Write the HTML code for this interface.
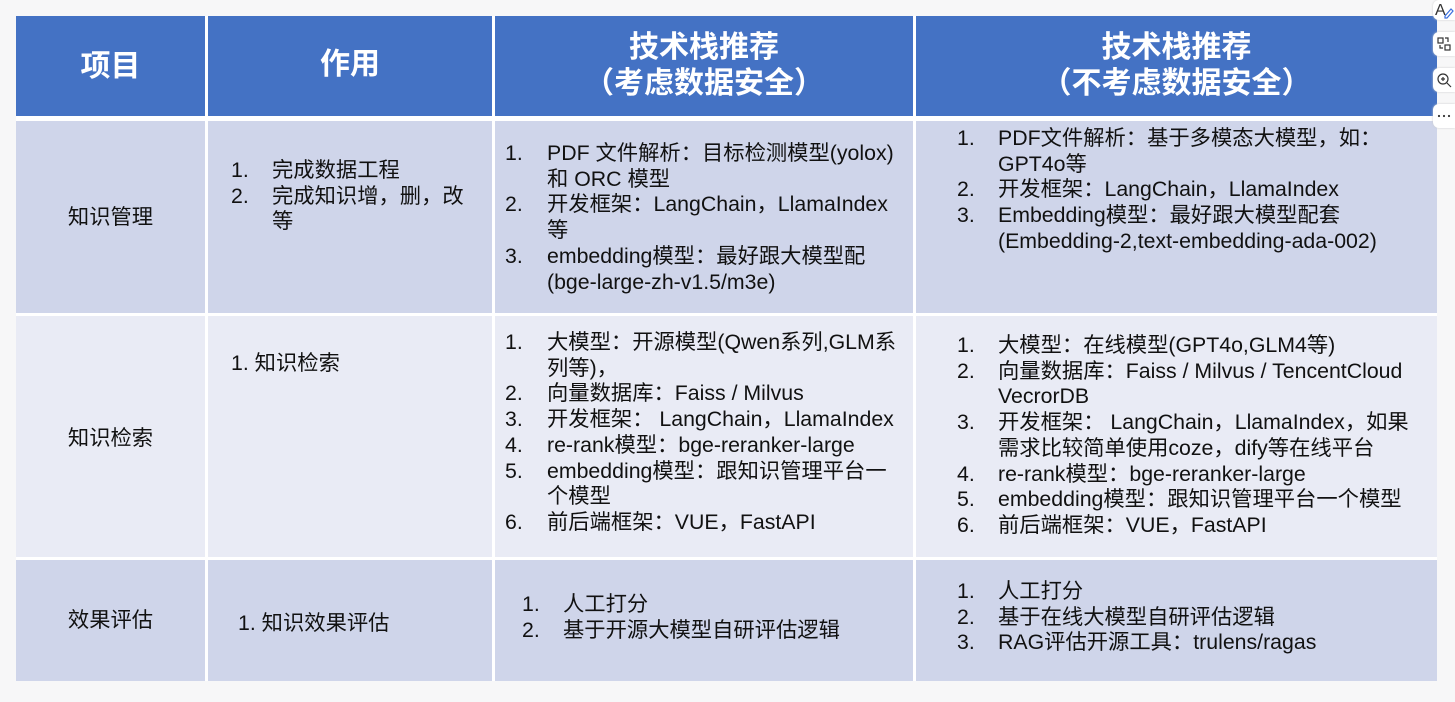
<!DOCTYPE html>
<html><head><meta charset="utf-8"><style>
*{margin:0;padding:0;box-sizing:border-box}
body{width:1455px;height:702px;background:#f7f7f8;position:relative;overflow:hidden;font-family:"Liberation Sans","Noto Sans CJK SC",sans-serif;color:#111}
.c{position:absolute}
.h{background:#4472c4}
.r1{background:#cfd5ea}
.r2{background:#e9ebf5}
.t{position:absolute;font-size:21.3px;line-height:25.7px;white-space:nowrap}
.hd{position:absolute;color:#fff;font-weight:bold;font-size:30px;line-height:36px;text-align:center;white-space:nowrap}
.n{position:absolute;left:0}
.ic{position:absolute;left:1433px;width:22px;background:#fff;border-radius:6px 0 0 6px;box-shadow:0 0 2px #ccc}
</style></head><body>
<div class="c" style="left:16px;top:16px;width:1421px;height:665px;background:#fff"></div>
<div class="c h" style="left:16px;top:16px;width:189px;height:100px"></div>
<div class="c h" style="left:208px;top:16px;width:284px;height:100px"></div>
<div class="c h" style="left:495px;top:16px;width:418px;height:100px"></div>
<div class="c h" style="left:916px;top:16px;width:521px;height:100px"></div>
<div class="c r1" style="left:16px;top:121px;width:189px;height:192px"></div>
<div class="c r1" style="left:208px;top:121px;width:284px;height:192px"></div>
<div class="c r1" style="left:495px;top:121px;width:418px;height:192px"></div>
<div class="c r1" style="left:916px;top:121px;width:521px;height:192px"></div>
<div class="c r2" style="left:16px;top:316px;width:189px;height:241px"></div>
<div class="c r2" style="left:208px;top:316px;width:284px;height:241px"></div>
<div class="c r2" style="left:495px;top:316px;width:418px;height:241px"></div>
<div class="c r2" style="left:916px;top:316px;width:521px;height:241px"></div>
<div class="c r1" style="left:16px;top:560px;width:189px;height:121px"></div>
<div class="c r1" style="left:208px;top:560px;width:284px;height:121px"></div>
<div class="c r1" style="left:495px;top:560px;width:418px;height:121px"></div>
<div class="c r1" style="left:916px;top:560px;width:521px;height:121px"></div>

<div class="hd" style="left:16px;width:189px;top:49px">项目</div>
<div class="hd" style="left:208px;width:284px;top:47px">作用</div>
<div class="hd" style="left:495px;width:418px;top:30px">技术栈推荐<br>（考虑数据安全）</div>
<div class="hd" style="left:916px;width:521px;top:30px">技术栈推荐<br>（不考虑数据安全）</div>

<div class="t" style="left:16px;width:189px;text-align:center;top:205px">知识管理</div>
<div class="t" style="left:16px;width:189px;text-align:center;top:426px">知识检索</div>
<div class="t" style="left:16px;width:189px;text-align:center;top:608px">效果评估</div>

<div class="t" style="left:231px;top:158px;padding-left:41px"><span class="n">1.</span>完成数据工程<br><span class="n" style="top:25.7px">2.</span>完成知识增，删，改<br>等</div>
<div class="t" style="left:231px;top:351px">1. 知识检索</div>
<div class="t" style="left:238px;top:611px">1. 知识效果评估</div>

<div class="t" style="left:505px;top:141px;padding-left:42px"><span class="n">1.</span>PDF 文件解析：目标检测模型(yolox)<br>和 ORC 模型<br><span class="n" style="top:51.4px">2.</span>开发框架：LangChain，LlamaIndex<br>等<br><span class="n" style="top:102.8px">3.</span>embedding模型：最好跟大模型配<br>(bge-large-zh-v1.5/m3e)</div>

<div class="t" style="left:505px;top:330px;padding-left:42px"><span class="n">1.</span>大模型：开源模型(Qwen系列,GLM系<br>列等)，<br><span class="n" style="top:51.4px">2.</span>向量数据库：Faiss / Milvus<br><span class="n" style="top:77.1px">3.</span>开发框架： LangChain，LlamaIndex<br><span class="n" style="top:102.8px">4.</span>re-rank模型：bge-reranker-large<br><span class="n" style="top:128.5px">5.</span>embedding模型：跟知识管理平台一<br>个模型<br><span class="n" style="top:179.9px">6.</span>前后端框架：VUE，FastAPI</div>

<div class="t" style="left:522px;top:592px;padding-left:41px"><span class="n">1.</span>人工打分<br><span class="n" style="top:25.7px">2.</span>基于开源大模型自研评估逻辑</div>

<div class="t" style="left:957px;top:126px;padding-left:41px"><span class="n">1.</span>PDF文件解析：基于多模态大模型，如：<br>GPT4o等<br><span class="n" style="top:51.4px">2.</span>开发框架：LangChain，LlamaIndex<br><span class="n" style="top:77.1px">3.</span>Embedding模型：最好跟大模型配套<br>(Embedding-2,text-embedding-ada-002)</div>

<div class="t" style="left:957px;top:333px;padding-left:41px"><span class="n">1.</span>大模型：在线模型(GPT4o,GLM4等)<br><span class="n" style="top:25.7px">2.</span>向量数据库：Faiss / Milvus / TencentCloud<br>VecrorDB<br><span class="n" style="top:77.1px">3.</span>开发框架： LangChain，LlamaIndex，如果<br>需求比较简单使用coze，dify等在线平台<br><span class="n" style="top:128.5px">4.</span>re-rank模型：bge-reranker-large<br><span class="n" style="top:154.2px">5.</span>embedding模型：跟知识管理平台一个模型<br><span class="n" style="top:179.9px">6.</span>前后端框架：VUE，FastAPI</div>

<div class="t" style="left:957px;top:579px;padding-left:41px"><span class="n">1.</span>人工打分<br><span class="n" style="top:25.7px">2.</span>基于在线大模型自研评估逻辑<br><span class="n" style="top:51.4px">3.</span>RAG评估开源工具：trulens/ragas</div>

<div class="ic" style="top:0;height:20px"><svg width="22" height="20"><text x="2" y="15" font-size="16" font-family="Liberation Sans" fill="#333">A</text><path d="M12 16l6-7 2 2-6 7h-2z" fill="none" stroke="#3a6fe0" stroke-width="1.2"/></svg></div>
<div class="ic" style="top:32px;height:24px"><svg width="22" height="24"><rect x="5" y="6" width="5" height="5" fill="none" stroke="#333" stroke-width="1.2"/><rect x="12" y="13" width="5" height="5" fill="none" stroke="#333" stroke-width="1.2"/><path d="M12 6h3v4M7 13v3h3" fill="none" stroke="#333" stroke-width="1.2"/></svg></div>
<div class="ic" style="top:68px;height:24px"><svg width="22" height="24"><circle cx="10" cy="11" r="5" fill="none" stroke="#333" stroke-width="1.2"/><path d="M8 11h4M10 9v4M14 15l4 4" stroke="#333" stroke-width="1.2"/></svg></div>
<div class="ic" style="top:104px;height:24px"><svg width="22" height="24"><circle cx="6" cy="12" r="1.1" fill="#333"/><circle cx="11" cy="12" r="1.1" fill="#333"/><circle cx="16" cy="12" r="1.1" fill="#333"/></svg></div>
</body></html>
